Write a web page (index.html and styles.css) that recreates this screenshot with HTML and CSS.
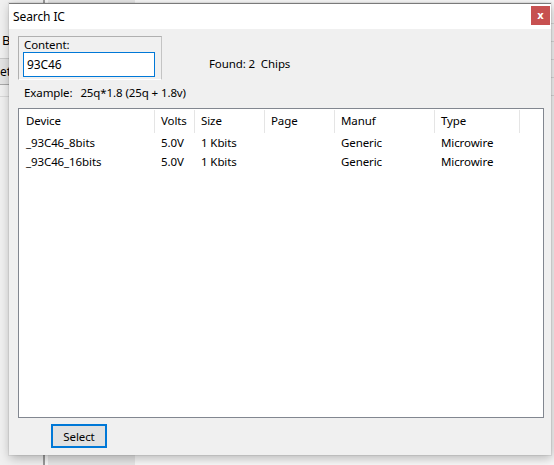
FILE: index.html
```html
<!DOCTYPE html>
<html lang="en">
<head>
  <meta charset="UTF-8">
  <meta name="viewport" content="width=device-width, initial-scale=1.0">
  <title>Search IC</title>
  <link rel="stylesheet" href="styles.css">
</head>
<body>
  <div class="app">
    <div class="side">
      <div class="side-label">By</div>
      <div class="side-btn">et</div>
      <div class="side-row"></div>
    </div>
    <div class="divider"></div>
    <div class="panel"></div>
    <div class="main">
      <div class="main-rows">
        <div class="main-row"><span class="dot"></span></div>
        <div class="main-row"><span class="dot"></span></div>
        <div class="main-row"><span class="dot"></span></div>
        <div class="main-row"><span class="dot"></span></div>
        <div class="main-row"><span class="dot"></span></div>
      </div>
    </div>
  </div>

  <div class="window">
    <div class="titlebar">
      <span class="title">Search IC</span>
      <button class="close">x</button>
    </div>
    <div class="content">
      <div class="search-row">
        <fieldset class="group">
          <label class="group-label" for="content">Content:</label>
          <input id="content" class="field" type="text" value="93C46">
        </fieldset>
        <div class="found">Found: 2&nbsp; Chips</div>
      </div>
      <div class="example">
        <span>Example:</span>
        <span class="example-value">25q*1.8 (25q + 1.8v)</span>
      </div>
      <div class="list">
        <div class="list-head">
          <div class="cell">Device</div>
          <div class="cell">Volts</div>
          <div class="cell">Size</div>
          <div class="cell">Page</div>
          <div class="cell">Manuf</div>
          <div class="cell">Type</div>
        </div>
        <div class="list-row">
          <div class="cell">_93C46_8bits</div>
          <div class="cell">5.0V</div>
          <div class="cell">1 Kbits</div>
          <div class="cell"></div>
          <div class="cell">Generic</div>
          <div class="cell">Microwire</div>
        </div>
        <div class="list-row">
          <div class="cell">_93C46_16bits</div>
          <div class="cell">5.0V</div>
          <div class="cell">1 Kbits</div>
          <div class="cell"></div>
          <div class="cell">Generic</div>
          <div class="cell">Microwire</div>
        </div>
      </div>
      <button class="btn-select">Select</button>
    </div>
  </div>
</body>
</html>
```

FILE: styles.css
```css
* {
  box-sizing: border-box;
}

body {
  margin: 0;
  width: 554px;
  height: 465px;
  overflow: hidden;
  position: relative;
  font-family: "Noto Sans", "Open Sans", sans-serif;
  font-size: 11.5px;
  letter-spacing: -0.1px;
  color: #000;
}

/* main program behind the dialog */
.app {
  display: flex;
  height: 465px;
  background: #f8f8f8;
}

.side {
  width: 43px;
  background: #f0f0f0;
  padding-top: 32px;
}

.side-label {
  height: 16px;
  padding-left: 2px;
  line-height: 16px;
  font-size: 13px;
}

.side-btn {
  margin-top: 10px;
  height: 27px;
  border-top: 1px solid #c8c8c8;
  border-bottom: 1px solid #a8a8a8;
  background: #e4e4e4;
  line-height: 26px;
  font-size: 12px;
}

.side-row {
  height: 12px;
  border-bottom: 1px solid #d8d8d8;
}

.divider {
  width: 2px;
  background: #9a9a9a;
}

.panel {
  width: 87px;
  margin-left: 3px;
  background: #e6e6e6;
}

.main {
  flex: 1;
  display: flex;
  justify-content: flex-end;
}

.main-rows {
  width: 10px;
  padding-top: 6px;
}

.main-row {
  height: 18px;
  border-bottom: 1px solid #dcdcdc;
  position: relative;
}

.dot {
  position: absolute;
  left: 1px;
  top: 8px;
  width: 2px;
  height: 2px;
  background: #1f3a60;
}

/* dialog */
.window {
  position: absolute;
  left: 9px;
  top: 3px;
  width: 542px;
  height: 452px;
  background: #f0f0f0;
  border-top: 1px solid #7a7a7a;
  box-shadow: 0 0 0 1px rgba(0, 0, 0, 0.06), 1px 3px 10px rgba(0, 0, 0, 0.28);
  display: flex;
  flex-direction: column;
}

.titlebar {
  height: 25px;
  background: #fff;
  display: flex;
  justify-content: space-between;
  align-items: flex-start;
  padding-left: 4px;
  padding-right: 1px;
}

.title {
  line-height: 25px;
  font-size: 12px;
}

.close {
  margin-top: 2px;
  width: 19px;
  height: 19px;
  border: none;
  padding: 0;
  background: #c75050;
  color: #fff;
  font-family: "DejaVu Sans", sans-serif;
  font-weight: bold;
  font-size: 10px;
  line-height: 17px;
}

.content {
  padding: 7px 7px 0 9px;
}

.search-row {
  display: flex;
  align-items: flex-start;
}

.group {
  margin: 0;
  width: 144px;
  height: 44px;
  padding: 1px 6px 2px 4px;
  border: 1px solid #b0b0b0;
  border-right-color: #c4c4c4;
  border-bottom-color: #fff;
}

.group-label {
  display: block;
  height: 14px;
  line-height: 14px;
  padding-left: 1px;
}

.field {
  display: block;
  width: 132px;
  height: 25px;
  margin: 0;
  padding: 0 3px;
  border: 1px solid #0078d7;
  background: #fff;
  font: inherit;
  font-size: 12px;
  letter-spacing: inherit;
  color: #000;
  outline: none;
}

.found {
  margin-left: 47px;
  padding-top: 20px;
  line-height: 15px;
}

.example {
  margin-top: 6px;
  padding-left: 6px;
  line-height: 14px;
}

.example-value {
  margin-left: 5px;
}

.list {
  margin-top: 8px;
  width: 526px;
  height: 310px;
  border: 1px solid #828790;
  background: #fff;
}

.list-head,
.list-row {
  display: grid;
  grid-template-columns: 136px 40px 70px 70px 100px 85px;
}

.list-head {
  height: 25px;
  align-items: start;
}

.list-head .cell {
  height: 23px;
  margin-top: 1px;
  line-height: 22px;
  border-right: 1px solid #e5e5e5;
}

.list-row {
  height: 19px;
  line-height: 18px;
}

.cell {
  padding-left: 6px;
  white-space: nowrap;
}

.cell:first-child {
  padding-left: 7px;
}

.btn-select {
  margin: 6px 0 0 33px;
  width: 56px;
  height: 24px;
  padding: 0;
  border: 2px solid #0078d7;
  background: #e1e1e1;
  font: inherit;
  letter-spacing: inherit;
  color: #000;
}
```
